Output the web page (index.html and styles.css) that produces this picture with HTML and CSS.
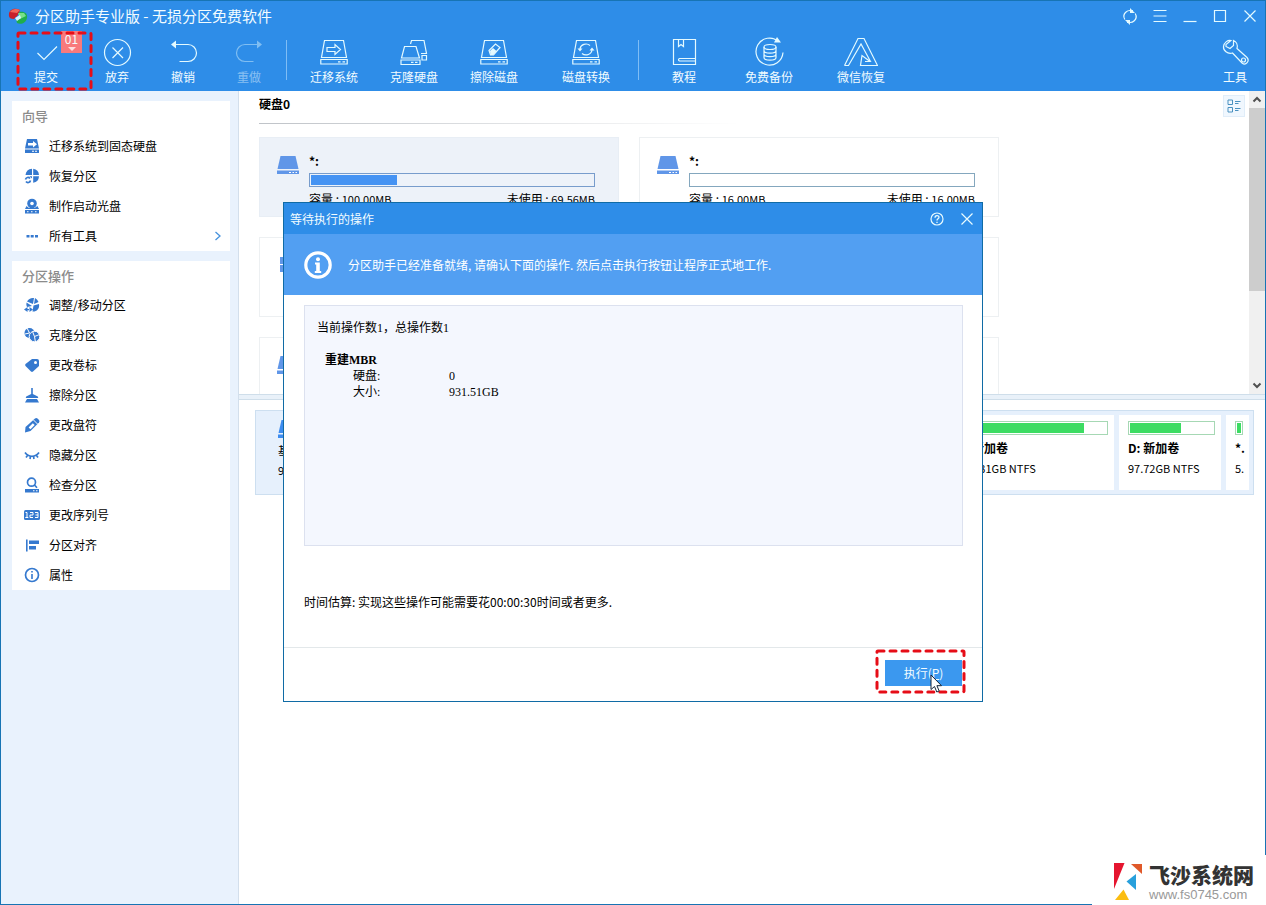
FILE: index.html
```html
<!DOCTYPE html>
<html lang="zh-CN">
<head>
<meta charset="utf-8">
<title>分区助手专业版</title>
<link rel="stylesheet" href="styles.css">
</head>
<body>
<svg class="defs" aria-hidden="true">
  <symbol id="disk" viewBox="0 0 22 18"><path d="M3.5 0h15L21.500 13h-21z"/><path d="M0 14.500h22V18H0z"/><path d="M12 16h2v1h-2zM15.500 16h1.500v1h-1.500zM18.500 16H20v1h-1.500z" fill="#fff"/></symbol>
  <symbol id="base" viewBox="0 0 28 26"><path d="M4.500 1.500h19l3 17h-25zM.8 20.500h26.400v4.500H.8z" fill="none" stroke="currentColor" stroke-width="1.200"/><path d="M18 22.800h2.500M22.500 22.800H25" stroke="currentColor" stroke-width="1.300"/></symbol>
</svg>
<div class="app">
  <header class="header">
    <div class="titlebar">
      <svg class="logo" viewBox="0 0 20 17"><path d="M1 8C0 2 6-1 12 2l-2 5-4 4C3 11 1 10 1 8z" fill="#c8202c"/><path d="M2 4c2-3 6-4 10-2L9 5z" fill="#f0665a"/><path d="M11 4c5-1 9 1 8 6-1 5-6 7-10 5l-1-4 5-1z" fill="#1fae4b"/><path d="M10 5l6 0 2 3-6 3z" fill="#76e08a"/><path d="M7 10l5-3 1 3-4 3z" fill="#d8f3ff"/></svg>
      <h1 class="app-title">分区助手专业版 - 无损分区免费软件</h1>
      <div class="win-controls">
        <button aria-label="刷新"><svg viewBox="0 0 16 16"><path d="M2.800 11.500A6 6 0 0 1 4 4q1.500-1.500 4-1.500h3M13.200 5.500A6 6 0 0 1 12 13q-1.500 1.500-4 1.500H5"/><path d="M8 0v5h5zM8 17v-5H3z" class="solid"/></svg></button>
        <button aria-label="菜单"><svg viewBox="0 0 16 16"><path d="M1.500 2.500h13M1.500 8h13M1.500 13.500h13"/></svg></button>
        <button aria-label="最小化"><svg viewBox="0 0 16 16"><path d="M1.500 13.500h13"/></svg></button>
        <button aria-label="最大化"><svg viewBox="0 0 16 16"><path d="M2.500 2.500h11v11h-11z"/></svg></button>
        <button aria-label="关闭"><svg viewBox="0 0 16 16"><path d="M2.500 2.500l11 11M13.500 2.500l-11 11"/></svg></button>
      </div>
    </div>
    <nav class="toolbar">
      <button class="tool first"><svg viewBox="0 0 34 34"><path d="M8.500 18l6.500 6.500L28 11.500"/></svg>提交
        <span class="badge">01<svg viewBox="0 0 8 4"><path d="M0 0h8L4 4z"/></svg></span>
        <svg class="mark"><rect x="2" y="2" width="73" height="56" rx="1"/></svg>
      </button>
      <button class="tool"><svg viewBox="0 0 34 34"><circle cx="17.500" cy="17.500" r="13"/><path d="M12.500 12.500l10.500 10.500M23 12.500L12.500 23"/></svg>放弃</button>
      <button class="tool"><svg viewBox="0 0 34 34"><path d="M8 9.500h14a8.500 8.500 0 0 1 0 17h-8.500"/><path class="solid" d="M5 9.500l5-4v8z"/></svg>撤销</button>
      <button class="tool disabled"><svg viewBox="0 0 34 34"><path d="M27 9.500H13a8.500 8.500 0 0 0 0 17h8.500"/><path class="solid" d="M30 9.500l-5-4v8z"/></svg>重做</button>
      <span class="sep"></span>
      <button class="tool mid"><svg viewBox="0 0 34 34"><use href="#base" x="3" y="4" width="28" height="26"/><path d="M10 12.500h8V9.500l5.500 5-5.500 5v-3h-8z"/></svg>迁移系统</button>
      <button class="tool mid"><svg viewBox="0 0 34 34"><path d="M7.500 11.500h11.500l3.500 11.500H4.500zM4 25h19v4.500H4zM13.500 9l1-3.500h12.500l2.500 13h-5.500M25 20.500h4.500V25H25zM14 27.300h2.500M18 27.300h2.500"/></svg>克隆硬盘</button>
      <button class="tool mid"><svg viewBox="0 0 34 34"><use href="#base" x="3" y="4" width="28" height="26"/><path d="M12 15.500L18.500 9l4.500 3.500-6.500 7.500h-3z"/><path class="solid" d="M13 16l3-3 3.500 3-3.500 4h-2.500z"/></svg>擦除磁盘</button>
      <button class="tool wide"><svg viewBox="0 0 34 34"><use href="#base" x="3" y="4" width="28" height="26"/><path d="M11 14a6 5.500 0 0 1 10-3.500M23 14.500a6 5.500 0 0 1-10 4"/><path class="solid" d="M8.500 13.500h5L11 16.500zM20.500 15.500h5L23 12.500z"/></svg>磁盘转换</button>
      <span class="sep flush"></span>
      <button class="tool book"><svg viewBox="0 0 34 34"><path d="M6.500 4.500h22v25h-22zM11.500 4.500v7l2.500-2 2.500 2v-7M28.500 23.500H12.500q-2 1 0 2.500h16"/></svg>教程</button>
      <button class="tool mid"><svg viewBox="0 0 34 34"><path d="M26.500 6.500A13.500 13.500 0 1 0 31 17.500M26.500 6.500A13 13 0 0 0 22 4"/><path class="solid" d="M25 2l4 5.500h-7z"/><ellipse cx="18" cy="12" rx="6" ry="2.500"/><path d="M12 12v10.500c0 3.500 12 3.500 12 0V12M12 15.500c0 3.500 12 3.500 12 0M12 19c0 3.500 12 3.500 12 0"/></svg>免费备份</button>
      <button class="tool wide"><svg viewBox="0 0 34 34"><path d="M.5 30.500L14 3.500h6l13.500 27H16.500l1.500-10 8 6h-5M.5 30.500h4L17 9l9.500 17.500"/></svg>微信恢复</button>
      <button class="tool end"><svg viewBox="0 0 34 34"><path d="M13 5.500c-3-1-7 2-7.500 6-.4 4 4 8 9 6.500l9.500 10c4 3 8-2 5-5.500l-10-9c1-4-1-7-3.500-8l0 5-3.500 3-4-2 0-2z"/><circle cx="25.500" cy="25" r="2"/></svg>工具</button>
    </nav>
  </header>
  <div class="content">
    <aside class="sidebar">
      <section class="panel">
        <h2>向导</h2>
        <button class="item"><svg viewBox="0 0 16 16"><path d="M3 1h10l2 9.500H1zM1 11.500h14V15H1z"/><path class="hole" d="M4 5h5V3l4 3.200-4 3.200V7.500H4zM8 12.800h2v1H8zM11 12.800h2v1h-2z"/></svg>迁移系统到固态硬盘</button>
        <button class="item"><svg viewBox="0 0 16 16"><path d="M8 .8A7 7 0 0 0 1.500 7H8zM9.200.8V7H15A6.800 6.800 0 0 0 9.200.8zM9.200 8.200H15a7 7 0 0 1-5.800 6.500zM8 8.200v2.300L5.500 8.200z"/><path class="line" d="M1.500 11.500a2.500 2.500 0 0 1 4.500-1M6.500 12.500a2.500 2.500 0 0 1-4.500 1"/></svg>恢复分区</button>
        <button class="item"><svg viewBox="0 0 16 16"><circle cx="8" cy="5.500" r="4.800"/><path d="M2.500 8L1 11h14l-1.500-3-3 2H5zM1 12h14v3.500H1z"/><circle class="hole" cx="8" cy="5.500" r="1.800"/><path class="hole" d="M3 13.200h1.500v1H3zM7 13.200h1.500v1H7zM11 13.200h1.500v1H11z"/></svg>制作启动光盘</button>
        <button class="item"><svg viewBox="0 0 16 16"><path d="M2.500 7h3v2.500h-3zM6.700 7h3v2.500h-3zM11 7h3v2.500h-3z"/></svg>所有工具<svg class="chev" viewBox="0 0 8 10"><path class="line" d="M1.500 1l4.500 4-4.500 4"/></svg></button>
      </section>
      <section class="panel">
        <h2>分区操作</h2>
        <button class="item"><svg viewBox="0 0 16 16"><path d="M9 7L3 4.500A7 7 0 0 1 10 1zM10 7l1-6a7 7 0 0 1 3.500 4zM9.500 8.500L15 7c1 5-3 8-6.500 7.500zM2.500 5.500L8 9l-5 1A7 7 0 0 1 2.500 5.500z"/><path d="M0 12.500L3.500 10v5zM9 12.500L5.500 10v5zM3 12h3v1.200H3z"/></svg>调整/移动分区</button>
        <button class="item"><svg viewBox="0 0 16 16"><circle cx="5.500" cy="6" r="5"/><circle class="rim" cx="10.500" cy="9.500" r="5.300"/><path class="cut" d="M5.500 6L3 1M5.500 6L1 7M10.500 9.500l-2-5M10.500 9.500l5-2M10.500 9.500l1 6"/></svg>克隆分区</button>
        <button class="item"><svg viewBox="0 0 16 16"><path d="M8 2h5q2 0 2 2v5l-6 5.500q-1 .8-2 0L1.500 9q-.8-1 0-2z"/><circle class="hole" cx="11.500" cy="5.500" r="1.500"/></svg>更改卷标</button>
        <button class="item"><svg viewBox="0 0 16 16"><path d="M7.200 1h1.600v6l5 2.500.5 1.500H1.700l.5-1.500 5-2.500zM3 12h10l2 3.500H1z"/></svg>擦除分区</button>
        <button class="item"><svg viewBox="0 0 16 16"><path d="M11 1.500q1.300-1 2.500 0l1.500 1.500q1 1.200 0 2.500L6.500 14l-5.500 1.500L1.500 10z"/><path class="cut" d="M9.500 3l4 4"/><path class="hole" d="M8.800 6.200l1.900 1.900-4.200 4.200-1.900-1.900z"/></svg>更改盘符</button>
        <button class="item"><svg viewBox="0 0 16 16"><path class="line" d="M1 5.500c3.500 5 10.500 5 14 0M3.500 8.500L2 10.500M6.500 9.500L6 12M9.500 9.500l.5 2.500M12.500 8.500l1.500 2"/></svg>隐藏分区</button>
        <button class="item"><svg viewBox="0 0 16 16"><circle class="line" cx="7.500" cy="5.200" r="4"/><path class="line" d="M10.500 8l2.500 2.800"/><path d="M1 12h14v3.500H1z"/><path class="hole" d="M9 13.300h1.500v1H9zM12 13.300h1.500v1H12z"/></svg>检查分区</button>
        <button class="item"><svg viewBox="0 0 16 16"><rect y="3" width="16" height="10" rx="1.500"/><path class="cut" d="M1.500 5.500H3v5M1.300 10.500h3M6 5.500h3V8H6v2.500h3M11 5.500h3v5h-3M11.500 8H14"/></svg>更改序列号</button>
        <button class="item"><svg viewBox="0 0 16 16"><path d="M2 2.500h1.600v12H2zM5 3.500h10V7H5zM5 9h7v3.500H5z"/></svg>分区对齐</button>
        <button class="item"><svg viewBox="0 0 16 16"><circle class="line" cx="8" cy="8" r="6.500"/><path d="M7.200 4h1.600v1.600H7.200zM7.200 7h1.600v5H7.200z"/></svg>属性</button>
      </section>
    </aside>
    <main class="main">
      <section class="upper">
        <div class="volumes">
          <div class="vol-head"><h2>硬盘0</h2></div>
          <div class="cards">
            <article class="card selected"><svg class="drive"><use href="#disk"/></svg><div class="vol"><b>*:</b><div class="meter"><div class="fill" style="width:30.500%"></div></div><p><span>容量 : <i>100.00MB</i></span><span>未使用 : <i>69.56MB</i></span></p></div></article>
            <article class="card"><svg class="drive"><use href="#disk"/></svg><div class="vol"><b>*:</b><div class="meter"></div><p><span>容量 : <i>16.00MB</i></span><span>未使用 : <i>16.00MB</i></span></p></div></article>
            <article class="card"><svg class="drive" viewBox="0 0 22 18"><path d="M3 1h7v7H3zM11 1h7v7h-7zM3 9h7v7H3zM11 9h7v7h-7z"/></svg></article>
            <article class="card"></article>
            <article class="card"><svg class="drive"><use href="#disk"/></svg></article>
            <article class="card"></article>
          </div>
        </div>
        <button class="view" aria-label="视图"><svg viewBox="0 0 14 14"><path d="M1 1h4.500v4.500H1zM1 8.500h4.500V13H1zM8 2.500h5.500M8 4.500h3.500M8 9.500h5.500M8 11.500h3.500"/></svg></button>
        <div class="scroll"><svg viewBox="0 0 16 16"><path d="M4.500 10L8 6.500l3.500 3.500"/></svg><div class="thumb"></div><svg viewBox="0 0 16 16"><path d="M4.500 6L8 9.500 11.500 6"/></svg></div>
      </section>
      <div class="splitter"></div>
      <section class="lower">
        <div class="disk">
          <div class="disk-info"><svg class="drive"><use href="#disk"/></svg><span>基本</span><span>931.51GB</span></div>
          <div class="part grow"><div class="gauge"></div></div>
          <div class="part data"><div class="gauge"><div class="green" style="width:85%"></div></div><b>E: 新加卷</b><span>833.31GB NTFS</span></div>
          <div class="part small"><div class="gauge"><div class="green" style="width:61%"></div></div><b>D: 新加卷</b><span>97.72GB NTFS</span></div>
          <div class="part tiny"><div class="gauge"><div class="green" style="width:100%"></div></div><b>*.</b><span>5.</span></div>
        </div>
      </section>
    </main>
  </div>
</div>
<div class="overlay">
  <div class="dialog" role="dialog" aria-labelledby="dlg-title">
    <div class="dlg-bar"><h2 id="dlg-title">等待执行的操作</h2>
      <button aria-label="帮助"><svg viewBox="0 0 14 14"><circle cx="7" cy="7" r="6"/><path d="M5 5.800C5 3 9 3 9 5.300 9 6.800 7 6.800 7 8.500M7 9.700v1.200" stroke-width="1.300"/></svg></button>
      <button aria-label="关闭"><svg viewBox="0 0 14 14"><path d="M1.500 1.500l11 11M12.500 1.500l-11 11"/></svg></button>
    </div>
    <div class="banner"><svg viewBox="0 0 28 28"><circle cx="14" cy="14" r="12.200" fill="none" stroke="#fff" stroke-width="3.200"/><circle cx="14" cy="8.300" r="2" fill="#fff"/><path d="M11 11.500h4.800v8.500h1.400v2h-6.400v-2h1.400v-6.500H11z" fill="#fff"/></svg><p>分区助手已经准备就绪, 请确认下面的操作. 然后点击执行按钮让程序正式地工作.</p></div>
    <div class="dlg-body">
      <div class="ops">
        <p>当前操作数1，总操作数1</p>
        <table>
          <caption>重建MBR</caption>
          <tr><th>硬盘:</th><td>0</td></tr>
          <tr><th>大小:</th><td>931.51GB</td></tr>
        </table>
      </div>
      <p class="estimate">时间估算: 实现这些操作可能需要花00:00:30时间或者更多.</p>
    </div>
    <div class="dlg-foot">
      <div class="run-wrap"><button class="run">执行(<u>P</u>)</button>
        <svg class="mark"><rect x="2" y="2" width="87" height="41" rx="1"/></svg>
        <svg class="cursor" viewBox="0 0 14 20"><path d="M1 1v14.500l3.500-3 2.300 5.500 2.400-1-2.300-5.300h4.600z" fill="#fff" stroke="#15253a"/></svg>
      </div>
    </div>
  </div>
</div>
<div class="brand">
  <svg viewBox="0 0 30 38"><path d="M0 0h10.500L0 26z" fill="#e5152f"/><path d="M17 1h11v10z" fill="#e0592a"/><path d="M12.500 18.500L22 11v16z" fill="#28a0dc"/><path d="M1 37l8.500-10.500L15 37z" fill="#fbbd12"/></svg>
  <div><strong>飞沙系统网</strong><span>www.fs0745.com</span></div>
</div>
</body>
</html>
```
FILE: styles.css
```css
* { box-sizing: border-box; }
body { margin: 0; font: 12px/16px "Noto Sans CJK SC", sans-serif; color: #000; background: #fff; }
h1, h2, p { margin: 0; font-size: 12px; font-weight: 400; }
button { margin: 0; padding: 0; border: 0; background: none; font: inherit; color: inherit; }
i { font-style: normal; font-size: 11px; }
.defs { position: absolute; width: 0; height: 0; }

.app { min-height: 100vh; display: flex; flex-direction: column; border: 1px solid #1774b4; }

.header { background: #2e8de8; color: #f2fcff; }
.header svg { fill: none; stroke: #e4faff; stroke-width: 1.2; color: #e4faff; }
.header .logo { width: 20px; height: 17px; stroke: none; }
.header .solid { fill: #e4faff; stroke: none; }
.titlebar { display: flex; align-items: center; height: 30px; padding-left: 7px; gap: 7px; }
.app-title { font-size: 15px; line-height: 20px; }
.win-controls { display: flex; margin-left: auto; }
.win-controls button { width: 30px; height: 30px; display: grid; place-items: center; }
.win-controls svg { width: 16px; height: 16px; overflow: visible; }

.toolbar { display: flex; height: 60px; padding-left: 7px; }
.tool { position: relative; width: 66px; display: flex; flex-direction: column; align-items: center; padding-top: 4px; white-space: nowrap; }
.tool > svg:first-child { width: 34px; height: 34px; }
.tool.first { width: 76px; }
.tool.mid { width: 80px; }
.tool.book { width: 90px; }
.tool.wide { width: 104px; }
.tool.end { width: 60px; margin-left: auto; }
.tool.disabled { opacity: .45; }
.sep { width: 1px; height: 40px; margin: 9px 7px 0 4px; background: #7fbdf5; }
.sep.flush { margin: 9px 0 0; }
.badge { position: absolute; left: 53px; top: 0; width: 21px; height: 22px; background: #f87a7c; text-align: center; line-height: 16px; }
.badge svg { position: absolute; left: 7px; bottom: 2px; width: 8px; height: 4px; }
.header .badge path { fill: #ffdede; stroke: none; }
svg.mark rect { fill: none; stroke: #e60d17; stroke-width: 3; stroke-dasharray: 6 6; stroke-linecap: round; }
.tool .mark { position: absolute; left: 8px; top: 0; width: 77px; height: 60px; }

.content { flex: 1; display: flex; }
.sidebar { width: 238px; flex: none; padding: 10px 8px 10px 11px; background: #e9f2fd; border-right: 1px solid #d3dfec; display: flex; flex-direction: column; gap: 10px; }
.panel { background: #fff; }
.panel h2 { padding-left: 10px; font-size: 13px; font-weight: 500; line-height: 30px; color: #8b8b8b; }
.panel + .panel h2 { line-height: 29px; }
.item { width: 100%; height: 30px; display: flex; align-items: center; gap: 9px; padding: 0 8px 0 12px; }
.item svg { width: 16px; height: 16px; fill: #3579cf; }
.item .line { fill: none; stroke: #3579cf; stroke-width: 1.7; }
.item .hole { fill: #fff; }
.item .rim { stroke: #fff; }
.item .cut { fill: none; stroke: #fff; stroke-width: 1; }
.item .chev { width: 8px; height: 10px; margin-left: auto; }
.chev .line { stroke: #4692dd; stroke-width: 1.3; }

.main { flex: 1; min-width: 0; display: flex; flex-direction: column; }
.upper { display: flex; height: 303px; overflow: hidden; }
.volumes { flex: 1; padding: 4px 0 0 20px; }
.vol-head { width: 480px; height: 29px; margin-bottom: 13px; border-bottom: 1px solid; border-image: linear-gradient(90deg, #bfc3c8, #fff) 1; }
.vol-head h2 { font-weight: 700; line-height: 18px; }
.cards { display: flex; flex-wrap: wrap; gap: 20px; max-width: 760px; }
.card { display: flex; gap: 10px; width: 360px; height: 80px; padding: 15px 23px 0 17px; border: 1px solid #edf0f2; }
.card.selected { background: #edf2f9; border-color: #e8eef5; }
.drive { width: 22px; height: 18px; margin-top: 3px; fill: #6096e8; flex: none; }
.vol { flex: 1; }
.vol b, .vol p { display: flex; justify-content: space-between; }
.vol .meter { height: 14px; margin: 4px 0; padding: 1px; border: 1px solid #779ccc; }
.vol .meter:empty { border-color: #84a7be; }
.fill { height: 100%; background: #4593f3; }
.view { width: 22px; height: 22px; margin: 4px 4px 0 0; display: grid; place-items: center; background: #f0f7fe; border: 1px solid #e0edf9; }
.view svg { width: 14px; height: 14px; fill: none; stroke: #4a91c0; }
.scroll { width: 16px; display: flex; flex-direction: column; background: #f0f0f0; }
.scroll svg { width: 16px; height: 17px; fill: none; stroke: #505050; stroke-width: 2; }
.scroll svg:last-child { margin-top: auto; }
.thumb { height: 183px; background: #cdcdcd; }
.splitter { height: 6px; background: #e9f1f9; border: 1px solid #cfdeea; border-width: 1px 0; }
.lower { padding: 10px 11px 0 16px; }
.disk { display: flex; gap: 5px; padding: 4px; height: 85px; background: #e6f0fc; border: 1px solid #cddff0; }
.disk-info { width: 90px; padding: 2px 0 0 18px; display: flex; flex-direction: column; gap: 4px; }
.disk-info .drive { fill: #3d8cf0; }
.part { display: flex; flex-direction: column; padding: 6px 6px 0 9px; background: #fff; gap: 5px; overflow: hidden; white-space: nowrap; }
.part span { line-height: 14px; }
.part span, .disk-info span { font-size: 11px; }
.grow { flex: 1; }
.data { width: 167px; padding-left: 11px; }
.small { width: 102px; }
.tiny { width: 23px; }
.gauge { height: 14px; padding: 1px; border: 1px solid #a6d8b4; }
.green { height: 100%; background: #3cdc62; }

.overlay { position: fixed; inset: 0; padding-bottom: 1px; display: grid; place-items: center; }
.dialog { width: 700px; max-width: 100%; background: #fff; border: 1px solid #106ba5; }
.dlg-bar { display: flex; align-items: center; height: 31px; padding: 0 0 0 6px; background: #2e8de8; color: #f2fcff; }
.dlg-bar h2 { flex: 1; }
.dlg-bar button { width: 30px; height: 30px; display: grid; place-items: center; }
.dlg-bar svg { width: 14px; height: 14px; fill: none; stroke: #e8fbff; stroke-width: 1.2; }
.banner { display: flex; align-items: center; gap: 16px; height: 61px; padding-left: 20px; background: #529ff2; color: #fff; }
.banner svg { width: 28px; height: 28px; }
.dlg-body { padding: 10px 19px 37px 20px; }
.ops { height: 241px; padding: 14px 12px; background: #f4f7fe; border: 1px solid #dce1ef; font-family: "Liberation Serif", "Noto Sans CJK SC", serif; }
.ops table { margin: 16px 0 0 36px; border-collapse: collapse; }
.ops caption { margin-left: -28px; text-align: left; font-weight: 700; }
.ops th { width: 96px; padding: 0; font-weight: 400; text-align: left; }
.ops td { padding: 0; }
.estimate { margin-top: 48px; }
.dlg-foot { display: flex; justify-content: flex-end; padding: 12px 20px 15px; border-top: 1px solid #e3e8ea; }
.run-wrap { position: relative; display: flex; }
.run { width: 77px; height: 26px; background: #3b98ef; color: #f2fcff; }
.run-wrap .mark { position: absolute; left: -10px; top: -11px; width: 91px; height: 45px; }
.cursor { position: absolute; left: 45px; top: 14px; width: 14px; height: 20px; }

.brand { position: fixed; right: 0; bottom: 0; width: 174px; height: 50px; display: flex; gap: 5px; padding: 8px 0 0 22px; background: #fff; }
.brand svg { width: 30px; height: 38px; flex: none; }
.brand div { display: flex; flex-direction: column; }
.brand strong { font-size: 21px; line-height: 22px; color: #333; font-weight: 900; }
.brand span { margin-top: 2px; font: 13px/15px "Liberation Sans", sans-serif; color: #999; }
```
